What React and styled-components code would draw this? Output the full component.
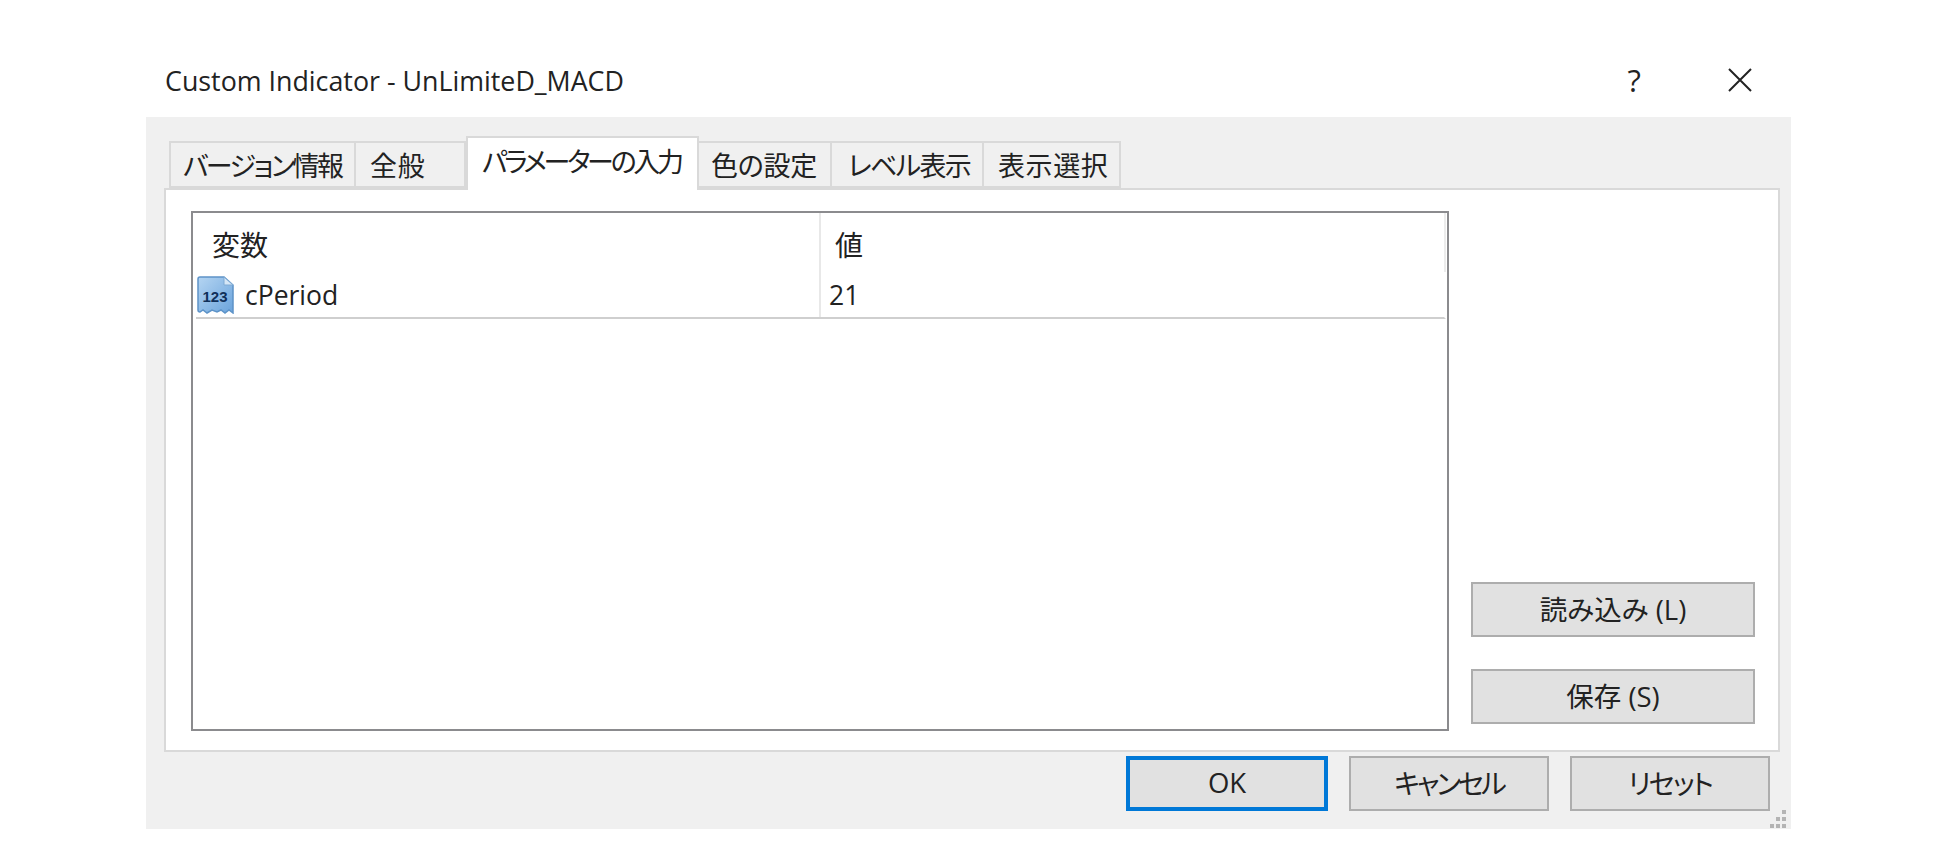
import React from "react";
import styled, { createGlobalStyle } from "styled-components";

const Global = createGlobalStyle`
  html, body { margin: 0; padding: 0; background: #fff; }
  body {
    font-family: "Open Sans", "Noto Sans CJK JP", sans-serif;
    font-feature-settings: "palt";
    color: #222;
  }
`;

const Page = styled.div`
  width: 1937px;
  height: 868px;
  padding: 0 146px;
  box-sizing: border-box;
`;

const TitleBar = styled.div`
  height: 117px;
  padding: 43px 39px 0 19px;
  box-sizing: border-box;
  display: flex;
  align-items: center;
  justify-content: space-between;
`;

const Title = styled.div`
  font-size: 26.800px;
`;

const WindowButtons = styled.div`
  display: flex;
  align-items: center;
  gap: 87px;
`;

const Help = styled.span`
  font-size: 31px;
  line-height: 34px;
`;

const Dialog = styled.div`
  position: relative;
  height: 712px;
  background: #f0f0f0;
  padding: 19px 11px 0 18px;
  box-sizing: border-box;
`;

const TabStrip = styled.div`
  display: flex;
  align-items: flex-end;
  height: 52px;
  padding-left: 5px;
  box-sizing: border-box;
`;

const Tab = styled.div`
  box-sizing: border-box;
  width: ${(p) => p.$width}px;
  height: ${(p) => (p.$active ? 54 : 47)}px;
  margin-bottom: ${(p) => (p.$active ? -2 : 0)}px;
  background: ${(p) => (p.$active ? "#fff" : "#f0f0f0")};
  border: 2px solid #d9d9d9;
  border-left-width: ${(p) => (p.$first || p.$active ? 2 : 0)}px;
  border-bottom: ${(p) => (p.$active ? "none" : "2px solid #d9d9d9")};
  font-size: 27px;
  letter-spacing: ${(p) => p.$track}px;
  line-height: ${(p) => (p.$active ? 47 : 45)}px;
  padding-left: ${(p) => p.$pad}px;
  white-space: nowrap;
  position: relative;
  z-index: ${(p) => (p.$active ? 1 : 0)};
`;

const Pane = styled.div`
  box-sizing: border-box;
  height: 564px;
  background: #fff;
  border: 2px solid #d9d9d9;
  padding: 21px 0 0 25px;
  display: flex;
`;

const ListBox = styled.div`
  box-sizing: border-box;
  width: 1258px;
  height: 520px;
  border: 2px solid #8b8b8e;
  padding: 0 1px 0 3px;
  background: #fff;
`;

const Row = styled.div`
  display: grid;
  grid-template-columns: 623px 1fr;
  height: ${(p) => (p.$header ? 59 : 45)}px;
  border-bottom: ${(p) => (p.$header ? "none" : "2px solid #cfcfcf")};
  box-sizing: ${(p) => (p.$header ? "border-box" : "content-box")};
  border-right: 2px solid ${(p) => (p.$header ? "#ececec" : "#fff")};
`;

const HeadCell = styled.div`
  display: flex;
  align-items: center;
  padding: 2px 0 0 ${(p) => p.$pad}px;
  font-size: 28px;
  border-left: ${(p) => (p.$divider ? "2px solid #e8e8e8" : "none")};
`;

const Cell = styled.div`
  display: flex;
  align-items: center;
  gap: 11px;
  font-size: 26.500px;
  padding-left: ${(p) => p.$pad}px;
  border-left: ${(p) => (p.$divider ? "2px solid #e8e8e8" : "none")};
`;

const Side = styled.div`
  margin-left: 22px;
  width: 284px;
  height: 513px;
  display: flex;
  flex-direction: column;
  justify-content: flex-end;
  gap: 32px;
`;

const Button = styled.div`
  box-sizing: border-box;
  width: ${(p) => p.$width || 284}px;
  height: 55px;
  padding-bottom: 3px;
  display: flex;
  align-items: center;
  justify-content: center;
  background: #e1e1e1;
  border: ${(p) => (p.$primary ? "4px solid #0078d7" : "2px solid #adadad")};
  font-size: 27.500px;
  letter-spacing: ${(p) => p.$track || 0}px;
`;

const Footer = styled.div`
  display: flex;
  justify-content: flex-end;
  gap: 21px;
  padding: 4px 10px 0 0;
`;

const Grip = styled.svg`
  position: absolute;
  right: 4px;
  bottom: 0;
`;

function NumberIcon() {
  return (
    <svg width="37" height="38" viewBox="0 0 37 38">
      <defs>
        <linearGradient id="doc" x1="0" y1="0" x2="1" y2="1">
          <stop offset="0" stopColor="#b5d5f2" />
          <stop offset="1" stopColor="#6aa3dc" />
        </linearGradient>
      </defs>
      <path
        d="M3 1H27L36 9V37L32 34L28 37L24 34L20 36L15 34L10 37L6 34L3 36C1.500 36 1 35 1 34V3C1 2 2 1 3 1Z"
        fill="url(#doc)"
        stroke="#5d93c8"
        strokeWidth="1.500"
      />
      <path d="M27 1V9H36Z" fill="#d5e6f6" stroke="#7eaad4" strokeWidth="1" />
      <text x="18" y="26" textAnchor="middle" fontFamily="Liberation Sans, sans-serif" fontWeight="700" fontSize="15" fill="#10305a">
        123
      </text>
    </svg>
  );
}

function CloseIcon() {
  return (
    <svg width="24" height="24" viewBox="0 0 24 24">
      <path d="M1 1L23 23M23 1L1 23" stroke="#222" strokeWidth="2" fill="none" />
    </svg>
  );
}

const tabs = [
  { label: "バージョン情報", width: 187, pad: 12, track: -2.500, first: true },
  { label: "全般", width: 110, pad: 14, track: 0.800 },
  { label: "パラメーターの入力", width: 233, pad: 14, track: -3.300, active: true },
  { label: "色の設定", width: 133, pad: 12, track: -0.300 },
  { label: "レベル表示", width: 152, pad: 16, track: -1.700 },
  { label: "表示選択", width: 137, pad: 14, track: 0.600 },
];

export default function App() {
  return (
    <Page>
      <Global />
      <TitleBar>
        <Title>Custom Indicator - UnLimiteD_MACD</Title>
        <WindowButtons>
          <Help>?</Help>
          <CloseIcon />
        </WindowButtons>
      </TitleBar>
      <Dialog>
        <TabStrip>
          {tabs.map((t) => (
            <Tab key={t.label} $width={t.width} $pad={t.pad} $track={t.track} $active={t.active} $first={t.first}>
              {t.label}
            </Tab>
          ))}
        </TabStrip>
        <Pane>
          <ListBox>
            <Row $header>
              <HeadCell $pad={16}>変数</HeadCell>
              <HeadCell $pad={14} $divider>値</HeadCell>
            </Row>
            <Row>
              <Cell $pad={1}>
                <NumberIcon />
                cPeriod
              </Cell>
              <Cell $pad={8} $divider>21</Cell>
            </Row>
          </ListBox>
          <Side>
            <Button>読み込み (L)</Button>
            <Button>保存 (S)</Button>
          </Side>
        </Pane>
        <Footer>
          <Button $primary $width={202}>OK</Button>
          <Button $width={200} $track={-3}>キャンセル</Button>
          <Button $width={200} $track={-2}>リセット</Button>
        </Footer>
        <Grip width="18" height="20" viewBox="0 0 18 20">
          <g fill="#b4b4b4">
            <rect x="13" y="1" width="4" height="4" />
            <rect x="7" y="8" width="4" height="4" />
            <rect x="13" y="8" width="4" height="4" />
            <rect x="1" y="15" width="4" height="4" />
            <rect x="7" y="15" width="4" height="4" />
            <rect x="13" y="15" width="4" height="4" />
          </g>
        </Grip>
      </Dialog>
    </Page>
  );
}
